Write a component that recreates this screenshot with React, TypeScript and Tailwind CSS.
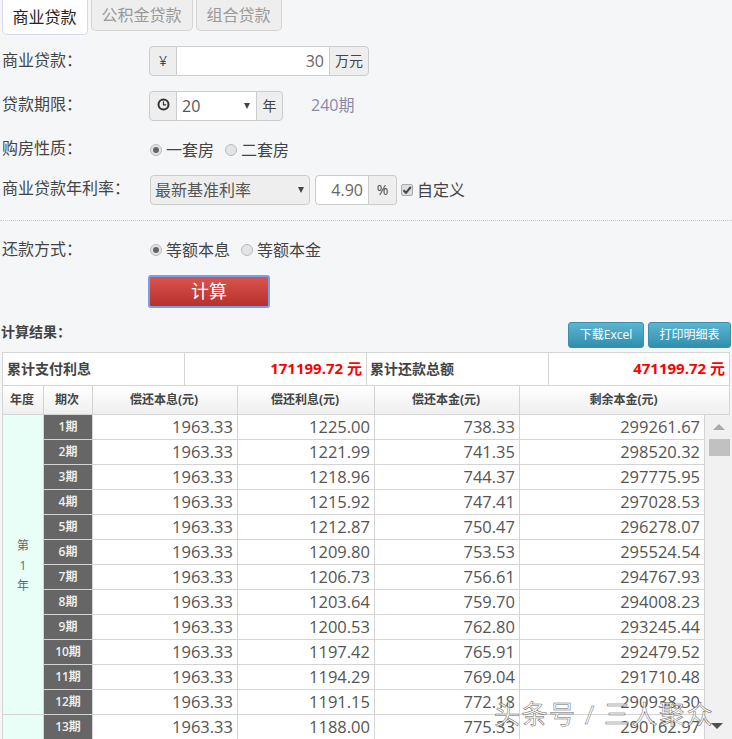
import React from "react";

const font = "font-['Open_Sans','Noto_Sans_CJK_SC',sans-serif]";

const rows: [string, string, string, string, string][] = [
  ["1期", "1963.33", "1225.00", "738.33", "299261.67"],
  ["2期", "1963.33", "1221.99", "741.35", "298520.32"],
  ["3期", "1963.33", "1218.96", "744.37", "297775.95"],
  ["4期", "1963.33", "1215.92", "747.41", "297028.53"],
  ["5期", "1963.33", "1212.87", "750.47", "296278.07"],
  ["6期", "1963.33", "1209.80", "753.53", "295524.54"],
  ["7期", "1963.33", "1206.73", "756.61", "294767.93"],
  ["8期", "1963.33", "1203.64", "759.70", "294008.23"],
  ["9期", "1963.33", "1200.53", "762.80", "293245.44"],
  ["10期", "1963.33", "1197.42", "765.91", "292479.52"],
  ["11期", "1963.33", "1194.29", "769.04", "291710.48"],
  ["12期", "1963.33", "1191.15", "772.18", "290938.30"],
  ["13期", "1963.33", "1188.00", "775.33", "290162.97"],
];

function Radio({ on, label }: { on?: boolean; label: string }) {
  return (
    <span className="flex items-center gap-[4px]">
      <span className="flex h-[12px] w-[12px] items-center justify-center rounded-full border border-[#bbb] bg-[#e4e4e4]">
        {on && <span className="h-[6px] w-[6px] rounded-full bg-[#666]" />}
      </span>
      <span>{label}</span>
    </span>
  );
}

function Addon({ children, className }: { children: React.ReactNode; className: string }) {
  return (
    <div className={"flex items-center justify-center border border-[#ccc] bg-[#eee] text-sm text-[#444] " + className}>
      {children}
    </div>
  );
}

function Label({ children, className }: { children: React.ReactNode; className: string }) {
  return <div className={"w-[149px] shrink-0 pl-[2px] text-base text-[#444] " + className}>{children}</div>;
}

const th = "flex items-center justify-center border-r border-[#d4d4d4] pr-[2px] text-xs font-bold text-[#444]";

export default function App() {
  return (
    <div className={"relative h-[739px] w-[732px] overflow-hidden bg-[#f4f6f8] " + font}>
      {/* tabs */}
      <div className="flex h-[46px] items-start pl-[2px] text-base">
        <div className="flex h-[35px] w-[86px] items-center justify-center rounded-b-[5px] border border-t-0 border-[#d6d6f4] bg-white pr-[1px] text-[#222]">
          商业贷款
        </div>
        <div className="ml-[3px] flex h-[31px] w-[102px] items-center justify-center rounded-b-[5px] border border-t-0 border-[#d4d4d4] bg-[#eee] pr-[1px] text-[#999]">
          公积金贷款
        </div>
        <div className="ml-[3px] flex h-[31px] w-[86px] items-center justify-center rounded-b-[5px] border border-t-0 border-[#d4d4d4] bg-[#eee] pr-[1px] text-[#999]">
          组合贷款
        </div>
      </div>

      {/* loan amount */}
      <div className="flex h-[30px] items-center">
        <Label className="pb-[2px]">商业贷款：</Label>
        <div className="flex h-[30px]">
          <Addon className="w-[28px] rounded-l-[4px]">¥</Addon>
          <div className="flex w-[152px] items-center justify-end border-y border-[#ccc] bg-white pr-[5px] text-base text-[#666]">30</div>
          <Addon className="w-[40px] rounded-r-[4px] border-l">万元</Addon>
        </div>
      </div>

      {/* term */}
      <div className="mt-[15px] flex h-[30px] items-center">
        <Label className="pb-[4px]">贷款期限：</Label>
        <div className="flex h-[30px]">
          <Addon className="w-[28px] rounded-l-[4px]">
            <svg width="13" height="13" viewBox="0 0 13 13" className="-mt-[3px]">
              <circle cx="6.5" cy="6.5" r="5" fill="none" stroke="#333" strokeWidth="2" />
              <path d="M6.5 3.5V6.8H9.2" fill="none" stroke="#333" strokeWidth="1.2" />
            </svg>
          </Addon>
          <div className="flex w-[79px] items-center justify-between border-y border-[#ccc] bg-white pl-[5px] pr-[6px] text-base text-[#555]">
            <span>20</span>
            <span className="h-0 w-0 border-x-[3.5px] border-t-[6px] border-x-transparent border-t-[#444]" />
          </div>
          <Addon className="w-[27px] rounded-r-[4px] border-l">年</Addon>
        </div>
        <div className="ml-[28px] pb-[3px] text-base text-[#8a8aa8]">240期</div>
      </div>

      {/* property */}
      <div className="mt-[15px] flex h-[30px] items-center">
        <Label className="pb-[6px]">购房性质：</Label>
        <div className="flex items-center gap-[11px] pb-[2px] pl-[1px] text-base text-[#444]">
          <Radio on label="一套房" />
          <Radio label="二套房" />
        </div>
      </div>

      {/* rate */}
      <div className="mt-[9px] flex h-[30px] items-center">
        <Label className="pb-[4px]">商业贷款年利率：</Label>
        <div className="ml-[1px] flex h-[30px] w-[160px] items-center justify-between rounded-[4px] border border-[#ccc] bg-[#eee] pl-[4px] pr-[5px] text-base text-[#555]">
          <span>最新基准利率</span>
          <span className="h-0 w-0 border-x-[3.5px] border-t-[6px] border-x-transparent border-t-[#444]" />
        </div>
        <div className="ml-[5px] flex h-[30px]">
          <div className="flex w-[54px] items-center justify-end rounded-l-[4px] border border-[#ccc] bg-white pr-[5px] text-base text-[#666]">4.90</div>
          <Addon className="w-[28px] rounded-r-[4px] border-l-0">%</Addon>
        </div>
        <span className="ml-[4px] flex h-[12px] w-[12px] items-center justify-center rounded-[2px] border border-[#aaa] bg-[#ddd]">
          <svg width="10" height="10" viewBox="0 0 10 10">
            <path d="M1.5 5.2L4 7.8L8.8 2" fill="none" stroke="#444" strokeWidth="2" />
          </svg>
        </span>
        <span className="ml-[4px] text-base text-[#444]">自定义</span>
      </div>

      <div className="mt-[15px] border-t border-dotted border-[#ccc]" />

      {/* repayment */}
      <div className="mt-[14px] flex h-[30px] items-center">
        <Label className="pb-[2px]">还款方式：</Label>
        <div className="flex items-center gap-[11px] pl-[1px] text-base text-[#444]">
          <Radio on label="等额本息" />
          <Radio label="等额本金" />
        </div>
      </div>

      <div className="mt-[10px] pl-[148px]">
        <div className="flex h-[33px] w-[122px] items-center justify-center rounded-[3px] border-2 border-[#7a9ee8] bg-gradient-to-b from-[#d9534f] to-[#b7312b] pb-[2px] text-lg text-white">
          计算
        </div>
      </div>

      {/* result toolbar */}
      <div className="mt-[14px] flex h-[26px] items-start">
        <div className="pl-[1px] text-sm font-bold text-[#444]">计算结果：</div>
        <div className="ml-auto mr-[1px] flex gap-[4px] text-xs text-white">
          <div className="flex h-[26px] w-[76px] items-center justify-center rounded-[3px] border border-[#3d8fa8] bg-gradient-to-b from-[#5bb5d2] to-[#2f8fae]">下载Excel</div>
          <div className="flex h-[26px] w-[83px] items-center justify-center rounded-[3px] border border-[#3d8fa8] bg-gradient-to-b from-[#5bb5d2] to-[#2f8fae]">打印明细表</div>
        </div>
      </div>

      {/* summary */}
      <div className="ml-[2px] mt-[4px] grid h-[34px] w-[728px] grid-cols-[182px_182px_182px_180px] border border-[#d4d4d4] bg-white text-sm font-semibold">
        <div className="flex items-center border-r border-[#d4d4d4] pl-[4px] text-[#444]">累计支付利息</div>
        <div className="flex items-center justify-end border-r border-[#d4d4d4] pr-[4px] text-[15px] font-bold text-[#f00]">171199.72 元</div>
        <div className="flex items-center border-r border-[#d4d4d4] pl-[3px] text-[#444]">累计还款总额</div>
        <div className="flex items-center justify-end pr-[4px] text-[15px] font-bold text-[#f00]">471199.72 元</div>
      </div>

      {/* header */}
      <div className="ml-[2px] grid h-[29px] w-[728px] grid-cols-[41px_49px_145px_137px_145px_209px] border-x border-b border-[#d4d4d4] bg-gradient-to-b from-white to-[#efefef]">
        <div className={th + " text-[#222]"}>年度</div>
        <div className={th + " text-[#222]"}>期次</div>
        <div className={th}>偿还本息(元)</div>
        <div className={th}>偿还利息(元)</div>
        <div className={th}>偿还本金(元)</div>
        <div className="flex items-center justify-center pr-[2px] text-xs font-bold text-[#444]">剩余本金(元)</div>
      </div>

      {/* body */}
      <div className="flex">
        <div className="ml-[2px] grid w-[703px] grid-cols-[41px_49px_145px_137px_145px_185px] auto-rows-[25px] border-l border-[#d4d4d4] bg-white">
          <div className="row-span-12 flex flex-col items-center justify-center border-b border-r border-[#d4d4d4] bg-[#e8fff8] pt-[3px] text-xs leading-[20px] text-[#666]">
            <span>第</span>
            <span>1</span>
            <span>年</span>
          </div>
          {rows.map((r, i) => (
            <React.Fragment key={r[0]}>
              {i === 12 && <div className="border-r border-[#d4d4d4] bg-[#e8fff8]" />}
              <div className="flex items-center justify-center border-b border-r border-[#d4d4d4] bg-[#666] text-xs font-semibold text-[#eee]">{r[0]}</div>
              {r.slice(1).map((v, j) => (
                <div key={j} className="flex items-center justify-end border-b border-r border-[#d4d4d4] pr-[4px] text-[16.5px] text-[#555]">{v}</div>
              ))}
            </React.Fragment>
          ))}
        </div>
        <div className="flex w-[27px] flex-col items-center bg-[#f1f1f1] pl-[1px]">
          <span className="mt-[9px] h-0 w-0 border-x-[6px] border-b-[6px] border-x-transparent border-b-[#aaa]" />
          <span className="mt-[9px] h-[17px] w-[21px] bg-[#c1c1c1]" />
        </div>
      </div>

      {/* scrollbar down arrow */}
      <span className="absolute left-[711px] top-[723px] h-0 w-0 border-x-[6px] border-t-[6px] border-x-transparent border-t-[#505050]" />

      {/* watermark */}
      <div className="absolute left-[494px] top-[695px] text-[26px] tracking-[1.5px] text-white/70 [-webkit-text-stroke:0.5px_#666]">
        头条号 / 三人聚众
      </div>
    </div>
  );
}
